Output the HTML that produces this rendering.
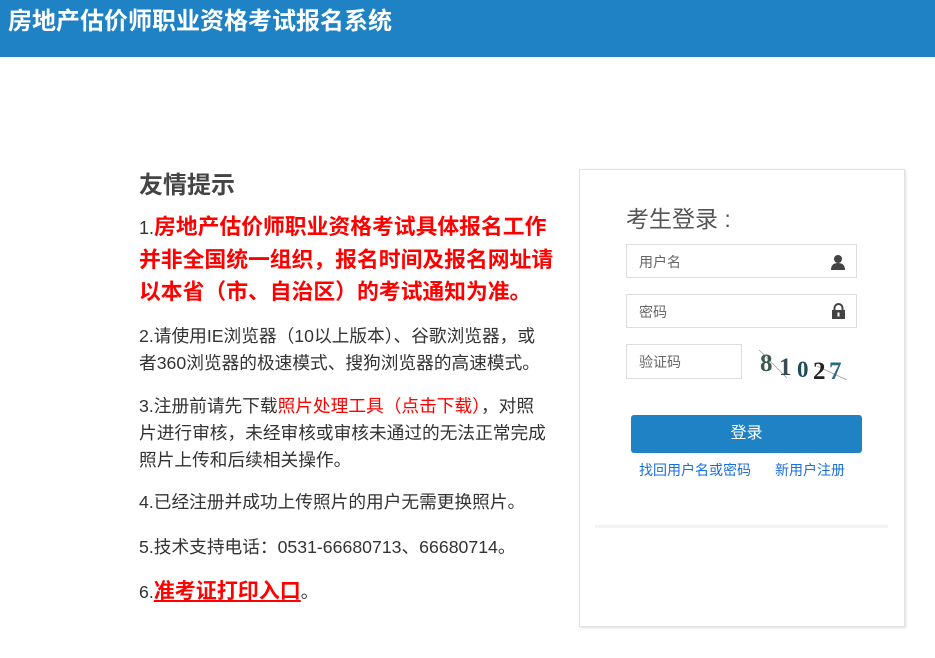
<!DOCTYPE html>
<html><head><meta charset="utf-8">
<style>
body{margin:0;width:935px;height:658px;background:#fff;font-family:"Liberation Sans","Noto Sans CJK SC",sans-serif;position:relative;overflow:hidden}
.hd{position:absolute;left:0;top:0;width:935px;height:57px;background:#1e82c4}
.hd span{position:absolute;left:8px;top:1px;color:#fff;font-size:24px;font-weight:bold;white-space:nowrap}
.l{position:absolute;left:139px;width:440px;color:#333;white-space:nowrap}
.t{top:165px;font-size:24px;font-weight:bold;color:#444}
.red{top:211px;font-size:21.8px;line-height:32px;font-weight:bold;color:#f00}
.red i{font-style:normal;font-weight:normal;color:#333;font-size:18px}
.p{font-size:17.7px;line-height:27px;color:#333}
.panel{position:absolute;left:579px;top:169px;width:324px;height:456px;border:1px solid #e2e2e2;box-shadow:1px 1px 3px #ddd}
.inp{position:absolute;border:1px solid #ddd;height:34px;font-size:14px;color:#666;line-height:34px;padding-left:12px;box-sizing:border-box}
a{color:#1a6fdc;text-decoration:none}
</style></head><body>
<div class="hd"><span>房地产估价师职业资格考试报名系统</span></div>
<div class="l t">友情提示</div>
<div class="l red"><i>1.</i>房地产估价师职业资格考试具体报名工作<br>并非全国统一组织，报名时间及报名网址请<br>以本省（市、自治区）的考试通知为准。</div>
<div class="l p" style="top:323px">2.请使用IE浏览器（10以上版本）、谷歌浏览器，或<br>者360浏览器的极速模式、搜狗浏览器的高速模式。</div>
<div class="l p" style="top:393px">3.注册前请先下载<span style="color:#f00">照片处理工具（点击下载）</span>，对照<br>片进行审核，未经审核或审核未通过的无法正常完成<br>照片上传和后续相关操作。</div>
<div class="l p" style="top:489px">4.已经注册并成功上传照片的用户无需更换照片。</div>
<div class="l p" style="top:534px">5.技术支持电话：0531-66680713、66680714。</div>
<div class="l p" style="top:578px">6.<span style="color:#f00;font-weight:bold;font-size:21px;text-decoration:underline">准考证打印入口</span>。</div>
<div class="panel">
<div style="position:absolute;left:51px;top:245px;width:231px;height:38px;background:#1e82c4;border-radius:3px;color:#fff;text-align:center;line-height:38px;font-size:16px">登录</div>
<div style="position:absolute;left:46px;top:30px;font-size:23px;color:#555">考生登录 :</div>
<div class="inp" style="left:46px;top:74px;width:231px">用户名<svg style="position:absolute;right:10px;top:9px" width="16" height="16" viewBox="0 0 16 16"><circle cx="8" cy="5" r="4" fill="#444"/><path d="M1 16 Q1 9 8 9 Q15 9 15 16Z" fill="#444"/></svg></div>
<div class="inp" style="left:46px;top:124px;width:231px">密码<svg style="position:absolute;right:10px;top:8px" width="15" height="16" viewBox="0 0 15 16"><path d="M3.5 7V5a4 4 0 0 1 8 0v2" stroke="#444" stroke-width="2" fill="none"/><rect x="1" y="7" width="13" height="9" fill="#444"/><rect x="6.5" y="9.5" width="2" height="4" fill="#fff"/></svg></div>
<div class="inp" style="left:46px;top:174px;width:116px;height:35px">验证码</div>
<div style="position:absolute;left:177px;top:176px;width:100px;height:38px">
<svg width="100" height="38" viewBox="0 0 100 38">
<line x1="2" y1="4" x2="30" y2="32" stroke="#999" stroke-width="0.7"/><line x1="60" y1="20" x2="90" y2="34" stroke="#999" stroke-width="0.7"/>
<text x="3" y="25" font-family="Liberation Serif, serif" font-weight="bold" font-size="25" fill="#3a5a50">8</text>
<text x="22" y="29" font-family="Liberation Serif, serif" font-weight="bold" font-size="25" fill="#3a4a55">1</text>
<text x="40" y="31" font-family="Liberation Serif, serif" font-weight="bold" font-size="23" fill="#1f4a5a">0</text>
<text x="56" y="33" font-family="Liberation Serif, serif" font-weight="bold" font-size="25" fill="#222">2</text>
<text x="72" y="33" font-family="Liberation Serif, serif" font-weight="bold" font-size="25" fill="#2a6a80">7</text>
</svg></div>
<div style="position:absolute;left:59px;top:290px;font-size:14px"><a>找回用户名或密码</a><a style="margin-left:24px">新用户注册</a></div>
<div style="position:absolute;left:15px;top:355px;width:293px;height:3px;background:#f3f3f3"></div>
</div>
</body></html>
